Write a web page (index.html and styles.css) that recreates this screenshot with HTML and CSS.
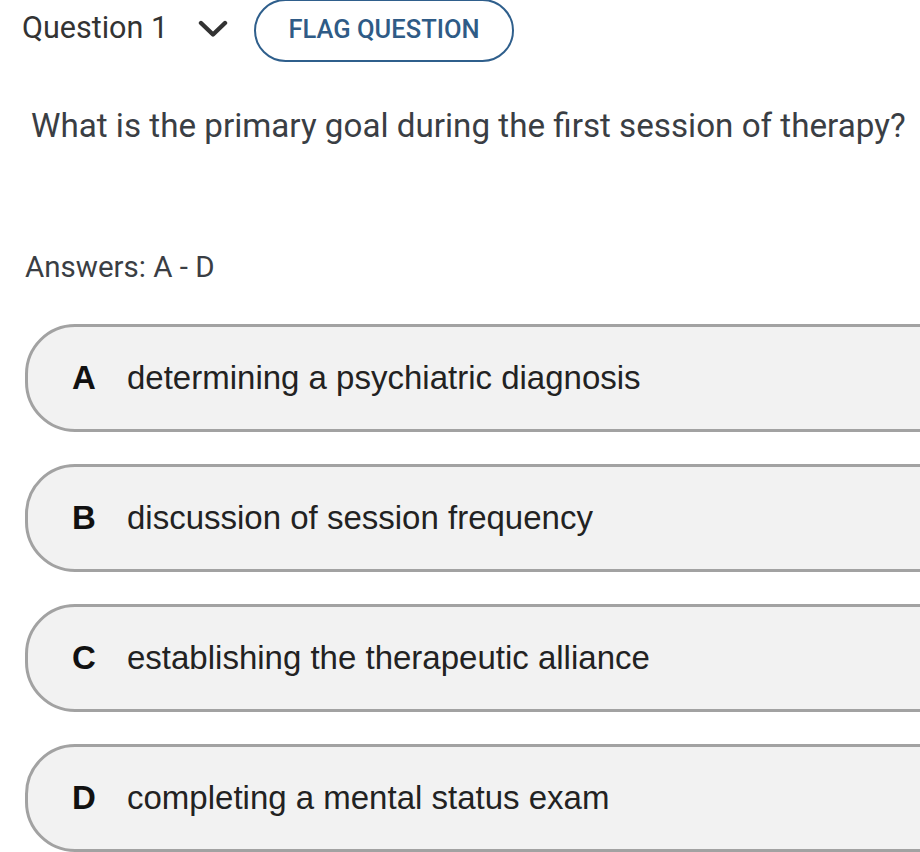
FILE: index.html
```html
<!DOCTYPE html>
<html>
<head>
<meta charset="utf-8">
<link rel="stylesheet" href="styles.css">
</head>
<body>
<div class="page">
  <header class="qhead">
    <span class="qtitle">Question 1</span>
    <svg class="chev" width="30" height="20" viewBox="0 0 30 20"><path d="M3 4 L15 15.5 L27 4" fill="none" stroke="#333" stroke-width="4.4" stroke-linecap="round" stroke-linejoin="round"/></svg>
    <button class="flag">FLAG QUESTION</button>
  </header>
  <p class="question">What is the primary goal during the first session of therapy?</p>
  <p class="answers">Answers: A - D</p>
  <ul class="options">
    <li class="option"><span class="letter">A</span><span class="otext">determining a psychiatric diagnosis</span></li>
    <li class="option"><span class="letter">B</span><span class="otext">discussion of session frequency</span></li>
    <li class="option"><span class="letter">C</span><span class="otext">establishing the therapeutic alliance</span></li>
    <li class="option"><span class="letter">D</span><span class="otext">completing a mental status exam</span></li>
  </ul>
</div>
</body>
</html>
```
FILE: styles.css
```css
html, body {
  margin: 0;
  padding: 0;
  background: #ffffff;
  overflow: hidden;
}
.page {
  width: 920px;
  height: 852px;
  overflow: hidden;
  font-family: Roboto, "Liberation Sans", sans-serif;
  color: #3a3e44;
}
.qhead {
  display: flex;
  align-items: center;
  height: 62px;
  padding-left: 22px;
}
.qtitle {
  font-size: 30.5px;
  color: #333;
  padding-bottom: 7px;
}
.chev {
  margin-left: 30px;
  margin-bottom: 4px;
}
.flag {
  margin-left: 26px;
  height: 63px;
  width: 260px;
  margin-top: -2px;
  border: 2.5px solid #2f5f8c;
  border-radius: 32px;
  background: #fff;
  color: #2f5b86;
  font-family: Roboto, sans-serif;
  font-weight: 500;
  font-size: 25.5px;
  padding: 0;
  padding-bottom: 2px;
}
.question {
  margin: 0;
  padding: 44px 0 0 31px;
  font-size: 33.2px;
  line-height: 40px;
}
.answers {
  margin: 0;
  padding: 103px 0 0 25px;
  font-size: 29.5px;
  line-height: 36px;
}
.options {
  list-style: none;
  margin: 0;
  padding: 39px 0 0 25px;
  display: flex;
  flex-direction: column;
  gap: 32px;
}
.option {
  display: flex;
  align-items: center;
  width: 1000px;
  height: 108px;
  box-sizing: border-box;
  border: 3px solid #a2a2a2;
  border-radius: 50px;
  background: #f2f2f2;
  padding-left: 44px;
  font-family: "Liberation Sans", Arial, sans-serif;
  color: #222;
}
.letter {
  width: 55px;
  font-weight: bold;
  font-size: 33px;
  color: #111;
}
.otext {
  font-size: 33px;
}
```
